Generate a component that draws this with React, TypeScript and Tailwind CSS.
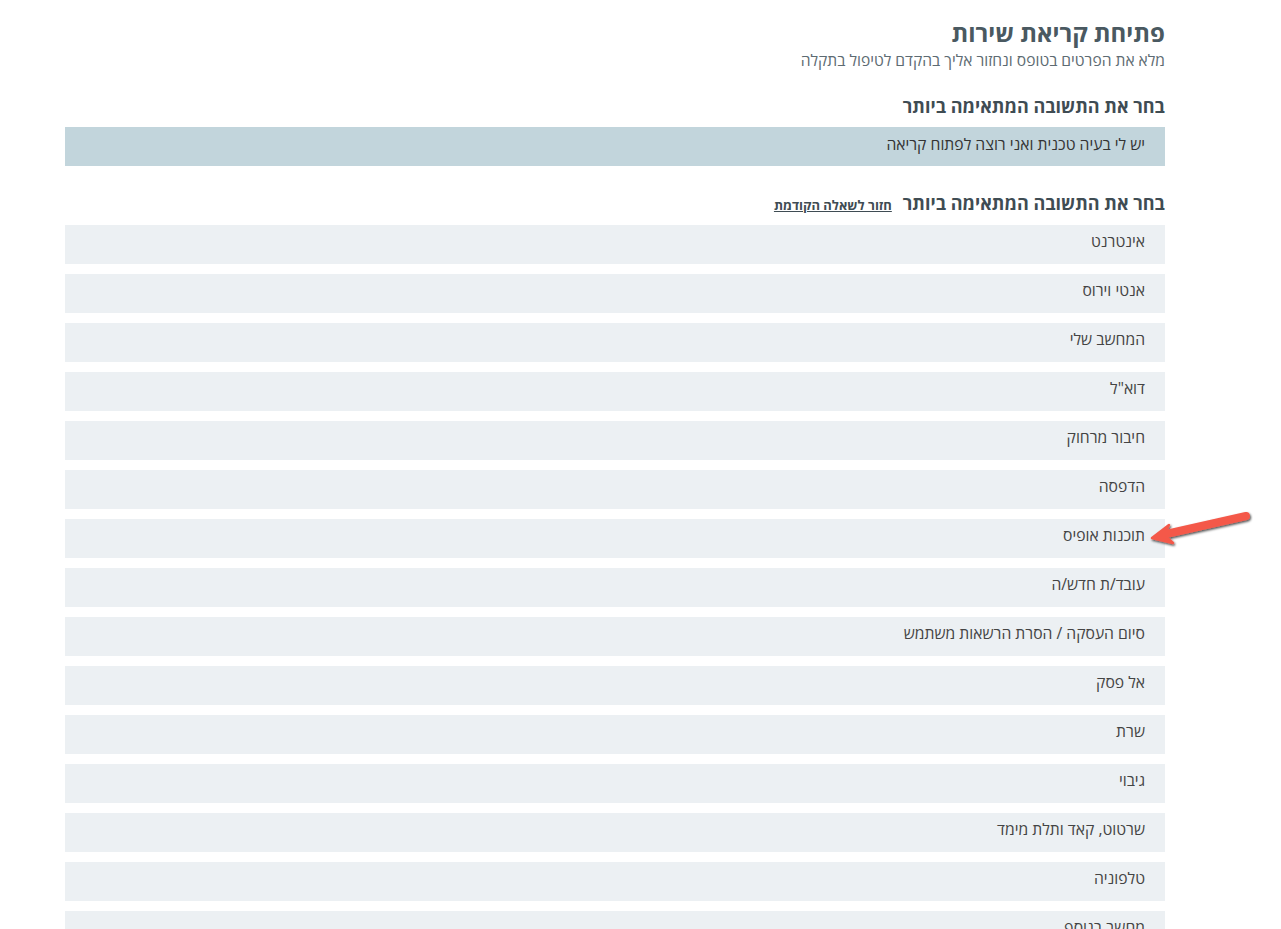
import React from "react";

const items = [
  "אינטרנט",
  "אנטי וירוס",
  "המחשב שלי",
  "דוא\"ל",
  "חיבור מרחוק",
  "הדפסה",
  "תוכנות אופיס",
  "עובד/ת חדש/ה",
  "סיום העסקה / הסרת הרשאות משתמש",
  "אל פסק",
  "שרת",
  "גיבוי",
  "שרטוט, קאד ותלת מימד",
  "טלפוניה",
  "מחשב בנוסף",
];

function Arrow() {
  return (
    <svg
      className="absolute left-[1148px] top-[507px] pointer-events-none"
      width="112"
      height="42"
      viewBox="0 0 112 42"
    >
      <defs>
        <filter id="sh" x="-20%" y="-50%" width="140%" height="200%">
          <feDropShadow dx="1" dy="1.5" stdDeviation="1.2" floodColor="#000" floodOpacity="0.7" />
        </filter>
      </defs>
      <g filter="url(#sh)">
        <line x1="98" y1="9" x2="18" y2="27" stroke="#f4594a" strokeWidth="8" strokeLinecap="round" />
        <path d="M4 31 L21 18 L16 28 L25 36 Z" fill="#f4594a" stroke="#f4594a" strokeWidth="2.5" strokeLinejoin="round" />
      </g>
    </svg>
  );
}

export default function App() {
  return (
    <div
      dir="rtl"
      className="relative min-h-[929px] bg-white overflow-hidden"
      style={{ fontFamily: '"Open Sans", "Noto Sans", "Liberation Sans", sans-serif' }}
    >
      <div className="w-[1100px] mr-[116px] pt-[16px]">
        <h1 className="text-[24px] leading-[34px] font-bold text-[#4a5961]">פתיחת קריאת שירות</h1>
        <p className="text-[15.6px] leading-[20px] text-[#5d6b72]">מלא את הפרטים בטופס ונחזור אליך בהקדם לטיפול בתקלה</p>

        <h2 className="mt-[24px] text-[18px] leading-[24px] font-bold text-[#3f4c53]">בחר את התשובה המתאימה ביותר</h2>
        <div className="mt-[9px] h-[39px] bg-[#c2d5dc] flex items-center pr-[20px] pb-[4px] text-[15.7px] text-[#333]">
          יש לי בעיה טכנית ואני רוצה לפתוח קריאה
        </div>

        <div className="mt-[25px] flex items-baseline gap-[11px]">
          <h2 className="text-[18px] leading-[24px] font-bold text-[#3f4c53]">בחר את התשובה המתאימה ביותר</h2>
          <a href="#" className="text-[13px] font-bold underline text-[#3f4c53]">חזור לשאלה הקודמת</a>
        </div>

        <div className="mt-[9px] flex flex-col gap-[10px]">
          {items.map((t) => (
            <div key={t} className="h-[39px] bg-[#ecf0f3] flex items-center pr-[20px] pb-[4px] text-[15.7px] text-[#444]">
              {t}
            </div>
          ))}
        </div>
      </div>
      <Arrow />
    </div>
  );
}
